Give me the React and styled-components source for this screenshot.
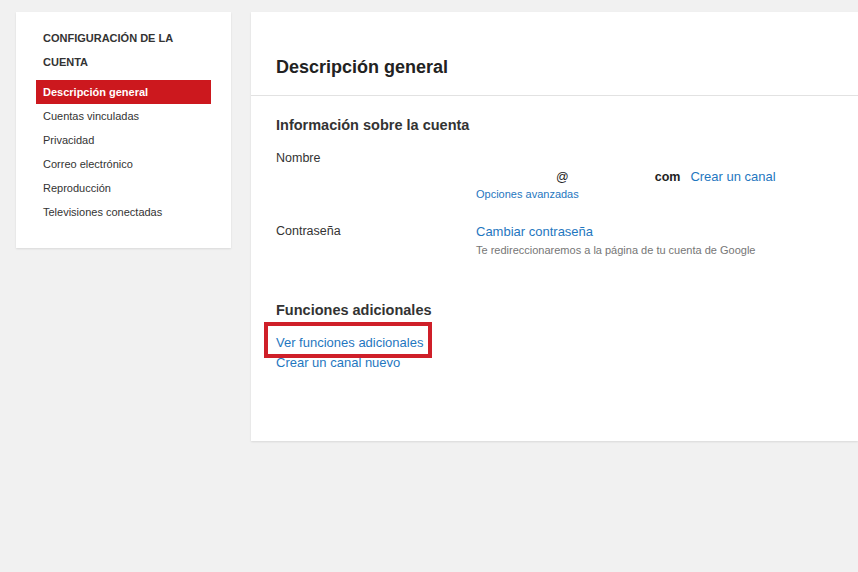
import React from "react";
import styled, { createGlobalStyle } from "styled-components";

const GlobalStyle = createGlobalStyle`
  html, body {
    margin: 0;
    padding: 0;
    background-color: #f1f1f1;
    font-family: "Liberation Sans", Arial, sans-serif;
    overflow: hidden;
  }
`;

const Page = styled.div`
  display: flex;
  align-items: flex-start;
  gap: 20px;
  padding: 12px 0 0 16px;
  width: 858px;
  height: 572px;
  box-sizing: border-box;
`;

const Sidebar = styled.aside`
  width: 215px;
  flex-shrink: 0;
  background-color: #fff;
  box-shadow: 0 1px 2px rgb(0 0 0 / 10%);
  padding: 14px 20px 24px;
  box-sizing: border-box;
`;

const SidebarTitle = styled.h2`
  margin: 0 0 6px;
  padding: 0 30px 0 7px;
  font-size: 11px;
  font-weight: 700;
  line-height: 24px;
  color: #333;
  text-transform: uppercase;
`;

const NavList = styled.ul`
  list-style: none;
  margin: 0;
  padding: 0;
`;

const NavItem = styled.li`
  height: 24px;
  line-height: 24px;
  padding: 0 7px;
  font-size: 11px;
  font-weight: ${(props) => (props.$active ? 700 : 400)};
  color: ${(props) => (props.$active ? "#fff" : "#333")};
  background-color: ${(props) => (props.$active ? "#cc181e" : "transparent")};
`;

const Main = styled.main`
  flex: 1;
  height: 429px;
  background-color: #fff;
  box-shadow: 0 1px 2px rgb(0 0 0 / 10%);
`;

const MainHeader = styled.header`
  height: 84px;
  display: flex;
  align-items: center;
  padding: 27px 25px 0;
  box-sizing: border-box;
  border-bottom: 1px solid #e2e2e2;
`;

const MainTitle = styled.h1`
  margin: 0;
  font-size: 18px;
  font-weight: 700;
  color: #222;
`;

const Content = styled.div`
  padding: 20px 25px 0;
`;

const Section = styled.section`
  margin-bottom: ${(props) => props.$gap || "0"};
`;

const SectionTitle = styled.h3`
  margin: 0 0 ${(props) => props.$gap || "14px"};
  font-size: 14.5px;
  font-weight: 700;
  line-height: 18px;
  color: #333;
`;

const Row = styled.div`
  display: grid;
  grid-template-columns: 200px 1fr;
  margin-bottom: ${(props) => props.$gap || "0"};
`;

const Label = styled.div`
  font-size: 12.5px;
  line-height: 19px;
  color: #333;
`;

const Values = styled.div`
  display: flex;
  flex-direction: column;
  align-items: flex-start;
`;

const Blank = styled.span`
  display: inline-block;
  width: ${(props) => props.$w};
  height: ${(props) => props.$h || "19px"};
`;

const EmailLine = styled.div`
  display: flex;
  align-items: center;
  height: 19px;
  font-size: 12.5px;
  color: #222;
`;

const Bold = styled.span`
  font-weight: 700;
`;

const Link = styled.a`
  font-size: ${(props) => props.$size || "13px"};
  line-height: ${(props) => props.$lh || "20px"};
  color: #1f77c0;
  text-decoration: none;
  cursor: pointer;
`;

const Hint = styled.div`
  font-size: 11px;
  line-height: 16px;
  color: #767676;
`;

const Highlight = styled.span`
  position: relative;
  display: inline-block;

  &::after {
    content: "";
    position: absolute;
    left: -12px;
    right: -9px;
    top: -11px;
    bottom: -5px;
    border: 4px solid #cf1f29;
  }
`;

const LinkStack = styled.div`
  display: flex;
  flex-direction: column;
  align-items: flex-start;
  margin-top: 13px;
`;

const navItems = [
  "Descripción general",
  "Cuentas vinculadas",
  "Privacidad",
  "Correo electrónico",
  "Reproducción",
  "Televisiones conectadas",
];

export default function App() {
  return (
    <>
      <GlobalStyle />
      <Page>
        <Sidebar>
          <SidebarTitle>Configuración de la cuenta</SidebarTitle>
          <NavList>
            {navItems.map((item, index) => (
              <NavItem key={item} $active={index === 0}>
                {item}
              </NavItem>
            ))}
          </NavList>
        </Sidebar>

        <Main>
          <MainHeader>
            <MainTitle>Descripción general</MainTitle>
          </MainHeader>

          <Content>
            <Section $gap="43px">
              <SectionTitle $gap="15px">Información sobre la cuenta</SectionTitle>
              <Row $gap="20px">
                <Label>Nombre</Label>
                <Values>
                  <Blank $w="120px" $h="18px" />
                  <EmailLine>
                    <Blank $w="80px" />
                    @
                    <Blank $w="86px" />
                    <Bold>com</Bold>
                    <Blank $w="10px" />
                    <Link $lh="19px">Crear un canal</Link>
                  </EmailLine>
                  <Link $size="11px" $lh="16px">
                    Opciones avanzadas
                  </Link>
                </Values>
              </Row>
              <Row>
                <Label>Contraseña</Label>
                <Values>
                  <Link>Cambiar contraseña</Link>
                  <Hint>Te redireccionaremos a la página de tu cuenta de Google</Hint>
                </Values>
              </Row>
            </Section>

            <Section>
              <SectionTitle>Funciones adicionales</SectionTitle>
              <LinkStack>
                <Highlight>
                  <Link>Ver funciones adicionales</Link>
                </Highlight>
                <Link>Crear un canal nuevo</Link>
              </LinkStack>
            </Section>
          </Content>
        </Main>
      </Page>
    </>
  );
}
